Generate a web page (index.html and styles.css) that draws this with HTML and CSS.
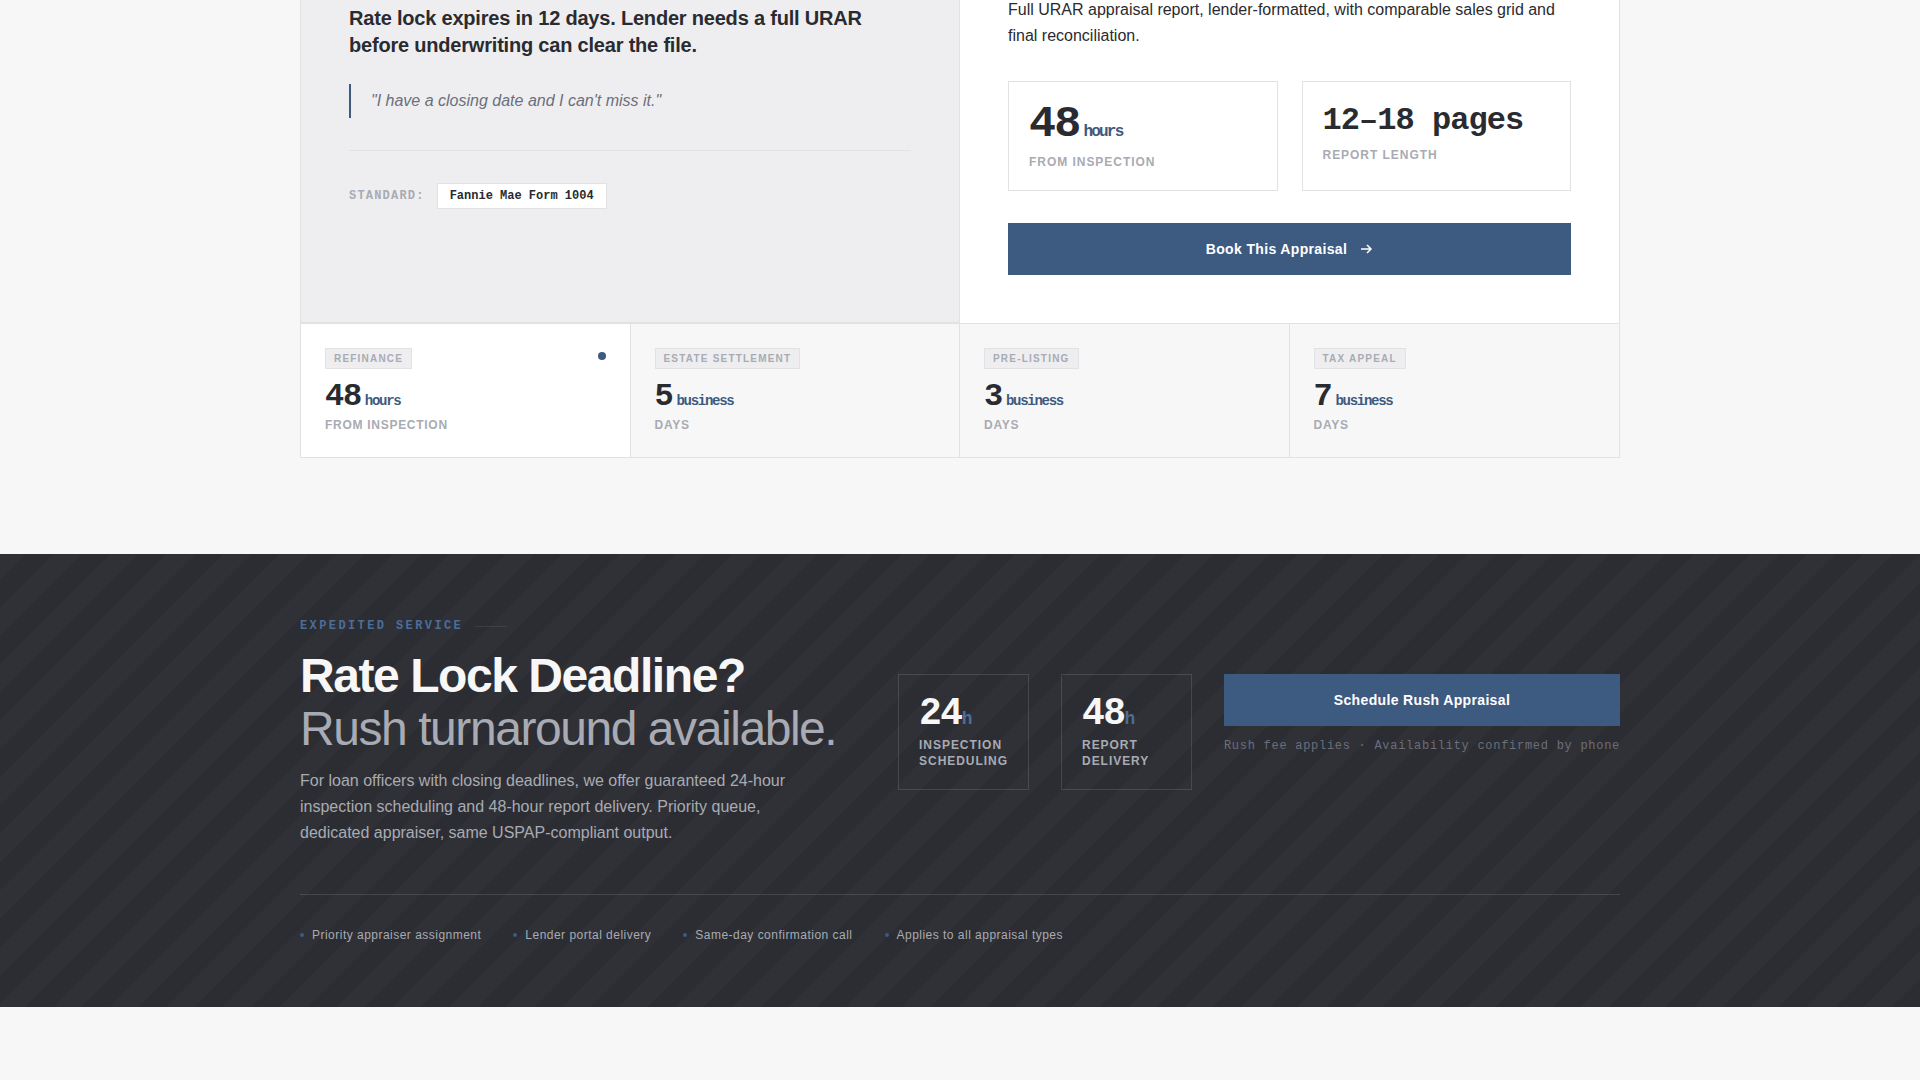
FILE: index.html
```
<!DOCTYPE html>
<html lang="en">
<head>
    <meta charset="UTF-8">
    <meta name="viewport" content="width=device-width, initial-scale=1.0">
    <title>Appraisal Services</title>
    <link rel="stylesheet" href="styles.css">
</head>
<body>
<main>
    <section class="services container">
        <div class="card">
            <div class="panels">
                <div class="panel panel-need">
                    <h3>Rate lock expires in 12 days. Lender needs a full URAR before underwriting can clear the file.</h3>
                    <blockquote>"I have a closing date and I can't miss it."</blockquote>
                    <div class="standard">
                        <span class="standard-label">Standard:</span>
                        <span class="standard-value">Fannie Mae Form 1004</span>
                    </div>
                </div>
                <div class="panel panel-result">
                    <p>Full URAR appraisal report, lender-formatted, with comparable sales grid and final reconciliation.</p>
                    <div class="stats">
                        <div class="stat">
                            <div class="stat-number">48<span class="unit">hours</span></div>
                            <div class="stat-label">From inspection</div>
                        </div>
                        <div class="stat">
                            <div class="stat-text">12–18 pages</div>
                            <div class="stat-label">Report length</div>
                        </div>
                    </div>
                    <button type="button" class="btn">
                        Book This Appraisal
                        <svg width="14" height="14" viewBox="0 0 14 14" fill="none" stroke="currentColor" stroke-width="1.5" aria-hidden="true">
                            <path d="M2 7h10M8 3l4 4-4 4"/>
                        </svg>
                    </button>
                </div>
            </div>
            <div class="tabs">
                <button type="button" class="tab active">
                    <span class="tag">Refinance</span>
                    <span class="tab-number">48<span class="unit">hours</span></span>
                    <span class="tab-label">From inspection</span>
                </button>
                <button type="button" class="tab">
                    <span class="tag">Estate Settlement</span>
                    <span class="tab-number">5<span class="unit">business</span></span>
                    <span class="tab-label">Days</span>
                </button>
                <button type="button" class="tab">
                    <span class="tag">Pre-Listing</span>
                    <span class="tab-number">3<span class="unit">business</span></span>
                    <span class="tab-label">Days</span>
                </button>
                <button type="button" class="tab">
                    <span class="tag">Tax Appeal</span>
                    <span class="tab-number">7<span class="unit">business</span></span>
                    <span class="tab-label">Days</span>
                </button>
            </div>
        </div>
    </section>

    <section class="rush">
        <div class="container">
            <div class="rush-main">
                <div class="rush-text">
                    <div class="eyebrow">Expedited Service</div>
                    <h2>Rate Lock Deadline?<br><span>Rush turnaround available.</span></h2>
                    <p>For loan officers with closing deadlines, we offer guaranteed 24-hour inspection scheduling and 48-hour report delivery. Priority queue, dedicated appraiser, same USPAP-compliant output.</p>
                </div>
                <div class="rush-side">
                    <div class="rush-times">
                        <div class="time">
                            <div class="time-number">24<span>h</span></div>
                            <div class="time-label">Inspection<br>Scheduling</div>
                        </div>
                        <div class="time">
                            <div class="time-number">48<span>h</span></div>
                            <div class="time-label">Report<br>Delivery</div>
                        </div>
                    </div>
                    <div class="rush-cta">
                        <button type="button" class="btn">Schedule Rush Appraisal</button>
                        <div class="note">Rush fee applies · Availability confirmed by phone</div>
                    </div>
                </div>
            </div>
            <ul class="features">
                <li>Priority appraiser assignment</li>
                <li>Lender portal delivery</li>
                <li>Same-day confirmation call</li>
                <li>Applies to all appraisal types</li>
            </ul>
        </div>
    </section>
</main>
</body>
</html>
```
FILE: styles.css
```
* {
    box-sizing: border-box;
    margin: 0;
    padding: 0;
}

body {
    font-family: "Liberation Sans", Arial, sans-serif;
    font-size: 16px;
    line-height: 26px;
    color: #2a2b30;
    background-color: #f7f7f7;
    overflow: hidden;
}

button {
    font-family: inherit;
    cursor: pointer;
}

.container {
    max-width: 1320px;
    margin: 0 auto;
}

.services {
    padding-bottom: 96px;
}

/* Card */
.card {
    margin-top: -3px;
    border: 1px solid #e2e2e4;
    border-top: none;
}

.panels {
    display: grid;
    grid-template-columns: 1fr 1fr;
}

.panel {
    padding: 0 48px 48px;
}

.panel-need {
    padding-top: 8px;
    background-color: #eeeef0;
    border-right: 1px solid #e2e2e4;
    border-bottom: 1px solid #e2e2e4;
}

.panel-result {
    background-color: #ffffff;
}

.panel h3 {
    font-size: 20px;
    line-height: 27px;
    letter-spacing: -0.01em;
    margin-bottom: 25px;
}

blockquote {
    padding: 4px 0 4px 20px;
    border-left: 2px solid #3d5a80;
    font-style: italic;
    color: #6b6e7b;
}

.standard {
    display: flex;
    align-items: center;
    gap: 12px;
    margin-top: 32px;
    padding-top: 32px;
    border-top: 1px solid #e2e2e4;
    font-family: "Liberation Mono", "Courier New", monospace;
    font-size: 12px;
    line-height: 16px;
    font-weight: bold;
}

.standard-label {
    letter-spacing: 0.1em;
    text-transform: uppercase;
    color: #a8abb3;
}

.standard-value {
    padding: 4px 12px;
    background-color: #ffffff;
    border: 1px solid #e2e2e4;
}

.stats {
    display: grid;
    grid-template-columns: 1fr 1fr;
    gap: 24px;
    margin: 32px 0;
}

.stat {
    padding: 20px;
    border: 1px solid #e2e2e4;
}

.stat-number,
.stat-text,
.tab-number,
.time-number {
    font-family: "Liberation Mono", "Courier New", monospace;
    font-weight: bold;
    letter-spacing: -0.04em;
}

.stat-number {
    font-size: 45px;
    line-height: 45px;
}

.stat-text {
    font-size: 32px;
    line-height: 38px;
    letter-spacing: -0.03em;
}

.unit {
    margin-left: 4px;
    font-size: 16px;
    line-height: 1;
    color: #3d5a80;
}

.stat-label,
.tab-label,
.time-label {
    font-size: 12px;
    line-height: 16px;
    font-weight: bold;
    text-transform: uppercase;
    color: #a8abb3;
}

.stat-label {
    margin-top: 8px;
    line-height: 15px;
    letter-spacing: 0.08em;
}

.btn {
    display: flex;
    align-items: center;
    justify-content: center;
    gap: 12px;
    width: 100%;
    height: 52px;
    border: none;
    font-size: 14px;
    font-weight: bold;
    letter-spacing: 0.025em;
    color: #ffffff;
    background-color: #3d5a80;
}

/* Tabs */
.tabs {
    display: grid;
    grid-template-columns: repeat(4, 1fr);
    border-top: 1px solid #e2e2e4;
}

.tab {
    position: relative;
    display: flex;
    flex-direction: column;
    align-items: flex-start;
    padding: 24px;
    border: none;
    border-right: 1px solid #e2e2e4;
    text-align: left;
    color: #2a2b30;
    background-color: #f7f7f7;
}

.tab:last-child {
    border-right: none;
}

.tab.active {
    background-color: #ffffff;
}

.tab.active::after {
    content: "";
    position: absolute;
    top: 28px;
    right: 24px;
    width: 8px;
    height: 8px;
    border-radius: 50%;
    background-color: #3d5a80;
}

.tag {
    padding: 4px 8px;
    border: 1px solid #e2e2e4;
    font-size: 10px;
    line-height: 11px;
    font-weight: bold;
    letter-spacing: 0.12em;
    text-transform: uppercase;
    color: #a8abb3;
    background-color: #eeeef0;
}

.tab-number {
    margin-top: 12px;
    font-size: 32px;
    line-height: 32px;
}

.tab-number .unit {
    font-size: 14px;
}

.tab-label {
    margin-top: 4px;
    letter-spacing: 0.06em;
}

/* Rush banner */
.rush {
    padding: 64px 0;
    color: #a8abb3;
    background-color: #2c2d32;
    background-image: repeating-linear-gradient(-45deg, transparent 0 20px, rgba(255, 255, 255, 0.02) 20px 40px);
}

.rush-main {
    display: grid;
    grid-template-columns: minmax(0, 1fr) auto;
    align-items: center;
    gap: 64px;
    padding-bottom: 48px;
    border-bottom: 1px solid rgba(255, 255, 255, 0.12);
}

.eyebrow {
    display: flex;
    align-items: center;
    gap: 12px;
    margin-bottom: 15px;
    font-family: "Liberation Mono", "Courier New", monospace;
    font-size: 12px;
    line-height: 16px;
    font-weight: bold;
    letter-spacing: 0.2em;
    text-transform: uppercase;
    color: #4a6d9a;
}

.eyebrow::after {
    content: "";
    width: 32px;
    height: 1px;
    background-color: rgba(255, 255, 255, 0.08);
}

.rush h2 {
    margin-bottom: 13px;
    font-size: 48px;
    line-height: 53px;
    letter-spacing: -0.03em;
    white-space: nowrap;
    color: #f7f7f7;
}

.rush h2 span {
    font-weight: normal;
    color: #a8abb3;
}

.rush p {
    max-width: 520px;
}

.rush-side {
    display: flex;
    gap: 32px;
}

.rush-times {
    display: grid;
    grid-template-columns: 1fr 1fr;
    gap: 32px;
}

.time {
    padding: 20px;
    border: 1px solid rgba(255, 255, 255, 0.12);
}

.time-number {
    font-size: 38px;
    line-height: 38px;
    color: #f7f7f7;
}

.time-number span {
    font-size: 18px;
    line-height: 1;
    color: #4a6d9a;
}

.time-label {
    margin-top: 4px;
    letter-spacing: 0.08em;
}

.note {
    margin-top: 12px;
    font-family: "Liberation Mono", "Courier New", monospace;
    font-size: 12px;
    line-height: 16px;
    letter-spacing: 0.06em;
    white-space: nowrap;
    color: #6b6e7b;
}

.features {
    display: flex;
    gap: 32px;
    padding-top: 32px;
    list-style: none;
    font-size: 12px;
    line-height: 16px;
    letter-spacing: 0.04em;
}

.features li {
    display: flex;
    align-items: center;
    gap: 8px;
}

.features li::before {
    content: "";
    width: 4px;
    height: 4px;
    border-radius: 50%;
    background-color: #3d5a80;
}
```
